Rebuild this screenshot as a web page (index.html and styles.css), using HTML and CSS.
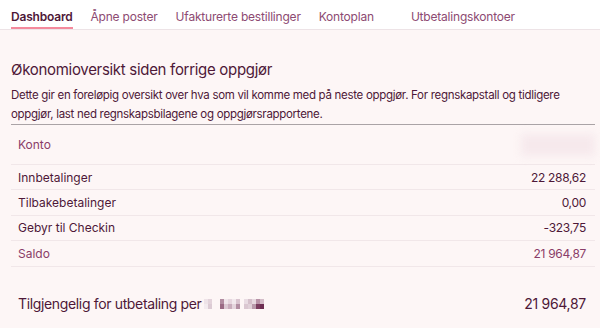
FILE: index.html
```html
<!DOCTYPE html>
<html lang="no">
<head>
  <meta charset="UTF-8">
  <meta name="viewport" content="width=device-width, initial-scale=1.0">
  <title>Dashboard</title>
  <link rel="stylesheet" href="styles.css">
</head>
<body>
  <nav class="tabs">
    <a class="tab active">Dashboard</a>
    <a class="tab">Åpne poster</a>
    <a class="tab">Ufakturerte bestillinger</a>
    <a class="tab">Kontoplan</a>
    <a class="tab wide">Utbetalingskontoer</a>
  </nav>

  <main class="content">
    <h2 class="title">Økonomioversikt siden forrige oppgjør</h2>
    <p class="intro">Dette gir en foreløpig oversikt over hva som vil komme med på neste oppgjør. For regnskapstall og tidligere oppgjør, last ned regnskapsbilagene og oppgjørsrapportene.</p>

    <div class="summary">
      <div class="row head">
        <span>Konto</span>
        <span class="blurred"></span>
      </div>
      <div class="row">
        <span>Innbetalinger</span>
        <span class="amount">22&nbsp;288,62</span>
      </div>
      <div class="row">
        <span>Tilbakebetalinger</span>
        <span class="amount">0,00</span>
      </div>
      <div class="row">
        <span>Gebyr til Checkin</span>
        <span class="amount">-323,75</span>
      </div>
      <div class="row total">
        <span>Saldo</span>
        <span class="amount">21&nbsp;964,87</span>
      </div>
    </div>

    <div class="available">
      <span class="label">Tilgjengelig for utbetaling per
        <!-- pixelated date -->
        <span class="mosaic">
          <i style="background:#eee3e8"></i><i style="background:#e3d3db"></i><i></i><i></i><i style="background:#b28da1"></i><i style="background:#f0e6eb"></i><i style="background:#e6d6de"></i><i style="background:#f2e9ed"></i><i style="background:#d9c4cf"></i><i></i><i style="background:#e9dce3"></i><i style="background:#d5c0cb"></i><i style="background:#e7d9e0"></i><i style="background:#b893a7"></i><i style="background:#d4bcc8"></i>
          <i style="background:#f3ebef"></i><i style="background:#dccbd4"></i><i></i><i></i><i style="background:#9a6a84"></i><i style="background:#dcc9d3"></i><i style="background:#c9adbc"></i><i style="background:#e5d5dd"></i><i style="background:#b28ea2"></i><i></i><i style="background:#dac7d1"></i><i style="background:#e0d0d8"></i><i style="background:#b99aab"></i><i style="background:#7a3d5f"></i><i style="background:#6e2d52"></i>
        </span>
      </span>
      <span class="amount">21&nbsp;964,87</span>
    </div>
  </main>
</body>
</html>
```

FILE: styles.css
```css
body {
  margin: 0;
  font-family: Inter, "Noto Sans", sans-serif;
  background-color: #fdf6f6;
  color: #4e1838;
}
.tabs {
  display: flex;
  gap: 18px;
  height: 30px;
  padding: 0 11px;
  background-color: #fff;
  border-bottom: 1px solid #ede3e6;
  box-sizing: border-box;
}
.tab {
  font-size: 12px;
  letter-spacing: -0.2px;
  line-height: 20px;
  padding-top: 7px;
  color: #8d4a72;
  border-bottom: 2px solid transparent;
}
.tab.active {
  font-weight: 600;
  color: #4e1838;
  border-bottom-color: #f4899c;
}
.tab.wide {
  margin-left: 19px;
}
.content {
  padding: 0 5px 0 11px;
}
.title {
  margin: 31px 0 7px;
  font-size: 15px;
  line-height: 18px;
  letter-spacing: -0.3px;
  font-weight: 400;
}
.intro {
  margin: 0;
  font-size: 11.5px;
  letter-spacing: -0.3px;
  line-height: 18.5px;
  padding-bottom: 1px;
  border-bottom: 1px solid #aaa3a6;
}
.row {
  display: flex;
  justify-content: space-between;
  align-items: center;
  height: 24.4px;
  padding: 0 9px 0 7px;
  font-size: 12px;
  border-bottom: 1px solid #f1e7e9;
}
.row.head {
  height: 39px;
  padding-right: 0;
  color: #8a3d68;
}
.row.total {
  color: #8a3d68;
}
.amount {
  letter-spacing: -0.3px;
  white-space: nowrap;
}
.blurred {
  width: 74px;
  height: 22px;
  background-color: #f6e9ec;
  filter: blur(4px);
}
.available {
  display: flex;
  justify-content: space-between;
  align-items: center;
  margin-top: 28px;
  padding: 0 9px 0 7px;
  font-size: 14px;
  line-height: 17px;
  letter-spacing: -0.35px;
}
.label {
  display: flex;
  align-items: center;
}
.mosaic {
  display: grid;
  grid-template-columns: repeat(15, 4px);
  grid-template-rows: 5px 5px;
  margin-left: 2px;
  margin-top: 2px;
}
```
